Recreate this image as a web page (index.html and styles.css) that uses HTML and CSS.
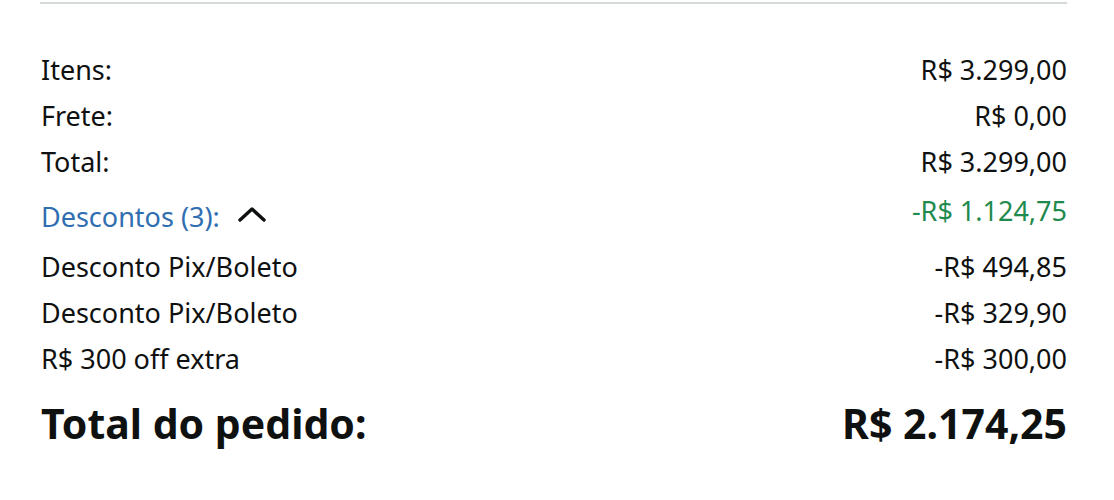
FILE: index.html
```html
<!DOCTYPE html>
<html lang="pt-BR">
<head>
<meta charset="utf-8">
<link rel="stylesheet" href="styles.css">
</head>
<body>
<div class="summary">
  <hr class="rule">
  <div class="rows">
    <div class="row"><span>Itens:</span><span>R$ 3.299,00</span></div>
    <div class="row"><span>Frete:</span><span>R$ 0,00</span></div>
    <div class="row"><span>Total:</span><span>R$ 3.299,00</span></div>
    <div class="row discounts">
      <span class="toggle"><span class="link">Descontos (3):</span>
        <svg class="chev" width="30" height="18" viewBox="0 0 30 18"><path d="M3 15 L15 4 L27 15" fill="none" stroke="#0F1111" stroke-width="3.4" stroke-linecap="round" stroke-linejoin="round"/></svg>
      </span>
      <span class="green">-R$ 1.124,75</span>
    </div>
    <div class="row"><span>Desconto Pix/Boleto</span><span>-R$ 494,85</span></div>
    <div class="row"><span>Desconto Pix/Boleto</span><span>-R$ 329,90</span></div>
    <div class="row"><span>R$ 300 off extra</span><span>-R$ 300,00</span></div>
  </div>
  <div class="grand"><span>Total do pedido:</span><span>R$ 2.174,25</span></div>
</div>
</body>
</html>
```
FILE: styles.css
```css
html, body {
  margin: 0;
  padding: 0;
  background: #ffffff;
}
body {
  font-family: "Noto Sans", "Open Sans", sans-serif;
  color: #0F1111;
}
.summary {
  width: 1027px;
  margin-left: 40px;
  padding-top: 2px;
}
.rule {
  margin: 0;
  border: 0;
  height: 2px;
  background: #d5d9d9;
}
.rows {
  margin-top: 42px;
  display: flex;
  flex-direction: column;
}
.row {
  display: flex;
  justify-content: space-between;
  align-items: center;
  height: 46px;
  font-size: 27px;
  padding-left: 1px;
}
.discounts {
  margin-top: 8px;
  align-items: flex-start;
  height: 51px;
}
.toggle {
  display: flex;
  align-items: center;
  gap: 17px;
  padding-top: 6px;
}
.link {
  color: #2F6EB0;
}
.chev {
  margin-top: -6px;
}
.green {
  color: #1E8A4E;
}
.grand {
  display: flex;
  justify-content: space-between;
  align-items: center;
  margin-top: 14px;
  font-size: 41px;
  font-weight: 700;
  padding-left: 1px;
}
```
